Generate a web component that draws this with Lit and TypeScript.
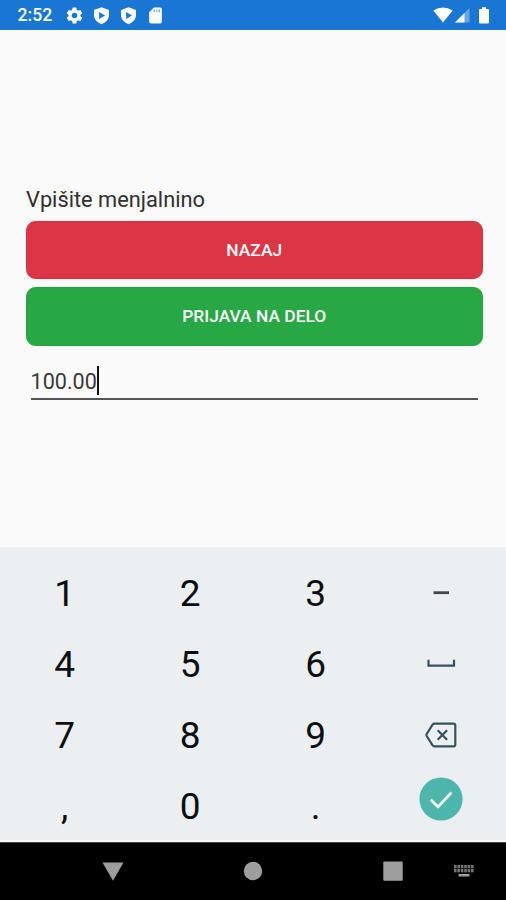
import { LitElement, html, css, svg } from "lit";
import { customElement } from "lit/decorators.js";

const GEAR =
  "M19.4 13c.04-.3.07-.6.07-1s-.03-.7-.07-1l2.1-1.65a.5.5 0 0 0 .12-.64l-2-3.46a.5.5 0 0 0-.6-.22l-2.5 1a7.3 7.3 0 0 0-1.7-.98l-.37-2.65A.5.5 0 0 0 14 2h-4a.5.5 0 0 0-.5.42l-.38 2.65a7.5 7.5 0 0 0-1.69.98l-2.5-1a.5.5 0 0 0-.6.22l-2 3.46a.5.5 0 0 0 .12.64L4.57 11c-.04.3-.07.65-.07 1s.03.7.07 1l-2.11 1.65a.5.5 0 0 0-.12.64l2 3.46c.12.22.39.3.6.22l2.5-1c.52.4 1.08.73 1.69.98l.38 2.65c.03.24.24.42.49.42h4c.25 0 .46-.18.49-.42l.38-2.65a7.3 7.3 0 0 0 1.69-.98l2.5 1c.22.08.48 0 .6-.22l2-3.46a.5.5 0 0 0-.12-.64zM12 15.5a3.5 3.5 0 1 1 0-7 3.5 3.5 0 0 1 0 7z";

@customElement("status-bar")
export class StatusBar extends LitElement {
  static styles = css`
    :host {
      display: flex;
      align-items: center;
      height: 29.5px;
      box-sizing: border-box;
      padding: 1px 17px 0 17.5px;
      background: #1976d2;
      color: #fff;
      font: 500 17.6px/29px Roboto, sans-serif;
    }
    svg { display: block; fill: currentColor; }
    .time { width: 47px; }
    .notices { display: flex; gap: 8px; align-items: center; }
    .system { display: flex; align-items: center; margin-left: auto; }
    .signal { margin-left: 2px; }
    .battery { margin-left: 9px; }
    .cut { fill: #1976d2; }
    .faint { opacity: 0.35; }
  `;

  private shield() {
    return html`<svg width="19" height="19" viewBox="0 0 24 24">
      <path d="M12 1.500 2.500 5v6.500C2.500 17 7 21.500 12 23c5-1.500 9.500-6 9.500-11.500V5z" />
      <path class="cut" d="M9 7.600v8.800l7.500-4.400z" />
    </svg>`;
  }

  render() {
    return html`
      <span class="time">2:52</span>
      <div class="notices">
        <svg width="19" height="19" viewBox="0 0 24 24"><path d=${GEAR} /></svg>
        ${this.shield()} ${this.shield()}
        <svg width="19" height="19" viewBox="0 0 24 24">
          <path d="M18 2h-8L4 8v12a2 2 0 0 0 2 2h12a2 2 0 0 0 2-2V4a2 2 0 0 0-2-2z" />
          <path class="cut" opacity=".6" d="M9.500 4.500h1.700v3.500H9.500zM12.800 4.500h1.700v3.500h-1.700zM16 4.500h1.700v3.500H16z" />
        </svg>
      </div>
      <div class="system">
        <svg width="20" height="16" viewBox="0 0 20 16"><path d="M0.300 3.500Q10-2.500 19.700 3.500L10 15.500z" /></svg>
        <svg class="signal" width="15" height="16" viewBox="0 0 15 16">
          <path class="faint" d="M14.500 1v14.500H0z" />
          <path d="M9.500 6v9.500H0z" />
        </svg>
        <svg class="battery" width="10" height="17" viewBox="0 0 10 17">
          <path d="M3 0.300h4v1.700H9a1 1 0 0 1 1 1V15.500a1 1 0 0 1-1 1H1a1 1 0 0 1-1-1V3a1 1 0 0 1 1-1h2z" />
        </svg>
      </div>
    `;
  }
}

@customElement("login-form")
export class LoginForm extends LitElement {
  static styles = css`
    :host {
      display: flex;
      flex-direction: column;
      box-sizing: border-box;
      padding: 157px 23.5px 0 26px;
      background: #fafafa;
      font-family: Roboto, sans-serif;
    }
    .label { font-size: 21.8px; line-height: 26px; color: #303030; margin-bottom: 8px; white-space: nowrap; }
    .button {
      box-sizing: border-box;
      height: 58.5px;
      margin-bottom: 8px;
      border: 1.5px solid;
      border-radius: 9.5px;
      color: #fff;
      font: 500 17.4px/55px Roboto, sans-serif;
      text-align: center;
      padding: 1px 0 0;
      text-transform: uppercase;
    }
    .danger { background: #dc3545; border-color: #d92d42; }
    .success { background: #28a745; border-color: #20a43d; }
    .field {
      display: flex;
      align-items: center;
      height: 46.5px;
      box-sizing: border-box;
      margin: 0 4.5px;
      padding-top: 9px;
      border-bottom: 2px solid #555;
      color: #383838;
      font-size: 21.6px;
    }
    .value { padding-top: 2px; }
    .caret { width: 2px; height: 29px; background: #111; }
  `;

  render() {
    return html`
      <div class="label">Vpišite menjalnino</div>
      <button class="button danger">Nazaj</button>
      <button class="button success">Prijava na delo</button>
      <div class="field"><span class="value">100.00</span><span class="caret"></span></div>
    `;
  }
}

@customElement("number-pad")
export class NumberPad extends LitElement {
  static styles = css`
    :host {
      display: grid;
      grid-template-columns: repeat(4, 125.5px);
      grid-template-rows: repeat(4, 71.2px);
      box-sizing: border-box;
      padding: 10.5px 0 0 2px;
      background: #eceff1;
      border-bottom: 2px solid #f6f8f9;
      color: #0c0f12;
      font: 400 37px/1 Roboto, sans-serif;
      overflow: hidden;
    }
    .key { display: flex; align-items: center; justify-content: center; }
    .icon { fill: none; stroke: #37515c; stroke-width: 2.2; }
    .dash { stroke: #3c484e; stroke-width: 2.8; }
    .enter { padding-bottom: 15px; }
    .disc { fill: #4db6ac; }
    .tick { fill: none; stroke: #fff; stroke-width: 2.6; }
  `;

  private icons: Record<string, unknown> = {
    dash: svg`<svg class="icon" width="32" height="28" viewBox="0 0 32 28"><path class="dash" d="M8.500 13.700h15.500"/></svg>`,
    space: svg`<svg class="icon" width="32" height="28" viewBox="0 0 32 28"><path d="M3.500 9.700v6H29v-6"/></svg>`,
    erase: svg`<svg class="icon" width="32" height="28" viewBox="0 0 32 28"><path stroke-linejoin="round" d="M9.500 2.700h19q1.800 0 1.800 1.800v19q0 1.800-1.800 1.800h-19q-1.200 0-1.900-1L1.700 15q-.6-1 0-2l5.900-9.300q.7-1 1.900-1z"/><path d="M12.700 9.300l9.400 9.400M22.100 9.300l-9.400 9.400"/></svg>`,
    enter: svg`<svg width="44" height="44" viewBox="0 0 44 44"><circle class="disc" cx="22" cy="22" r="21.600"/><path class="tick" d="M11.800 22.800l7.200 7L32.500 15.500"/></svg>`,
  };

  render() {
    const keys = ["1", "2", "3", "dash", "4", "5", "6", "space", "7", "8", "9", "erase", ",", "0", ".", "enter"];
    return keys.map((k) => html`<div class="key ${k === "enter" ? "enter" : ""}">${this.icons[k] ?? k}</div>`);
  }
}

@customElement("nav-bar")
export class NavBar extends LitElement {
  static styles = css`
    :host {
      display: grid;
      grid-template-columns: 43px 140px 140px 140px 43px;
      align-items: center;
      justify-items: center;
      box-sizing: border-box;
      background: #000;
      border-top: 1px solid #444;
      padding-bottom: 2px;
    }
    svg { display: block; fill: #9e9e9e; }
    .back { grid-column: 2; }
    .switch { justify-self: start; margin-left: -9.5px; }
  `;

  render() {
    return html`
      <svg class="back" width="22" height="20" viewBox="0 0 22 20"><path d="M.5 1.500h21L11 19.800z" /></svg>
      <svg width="20" height="20" viewBox="0 0 20 20"><circle cx="10" cy="10" r="9.200" /></svg>
      <svg width="20" height="20" viewBox="0 0 20 20"><rect x=".3" y=".4" width="19.400" height="19.400" rx="1" /></svg>
      <svg class="switch" width="20" height="14" viewBox="0 0 20 14">
        ${[0, 3.4, 6.8, 10.2, 13.6, 17].map((x) =>
          [1, 5].map((y) => svg`<rect x=${x} y=${y} width="2.600" height="3.300" opacity=".75" />`),
        )}
        <rect x="4.500" y="10" width="11" height="2.500" />
      </svg>
    `;
  }
}

@customElement("app-root")
export class AppRoot extends LitElement {
  static styles = css`
    :host {
      display: grid;
      grid-template-rows: 29.5px 517.5px 295px 58px;
      width: 506px;
      height: 900px;
      overflow: hidden;
      background: #fafafa;
    }
  `;

  render() {
    return html`
      <status-bar></status-bar>
      <login-form></login-form>
      <number-pad></number-pad>
      <nav-bar></nav-bar>
    `;
  }
}
